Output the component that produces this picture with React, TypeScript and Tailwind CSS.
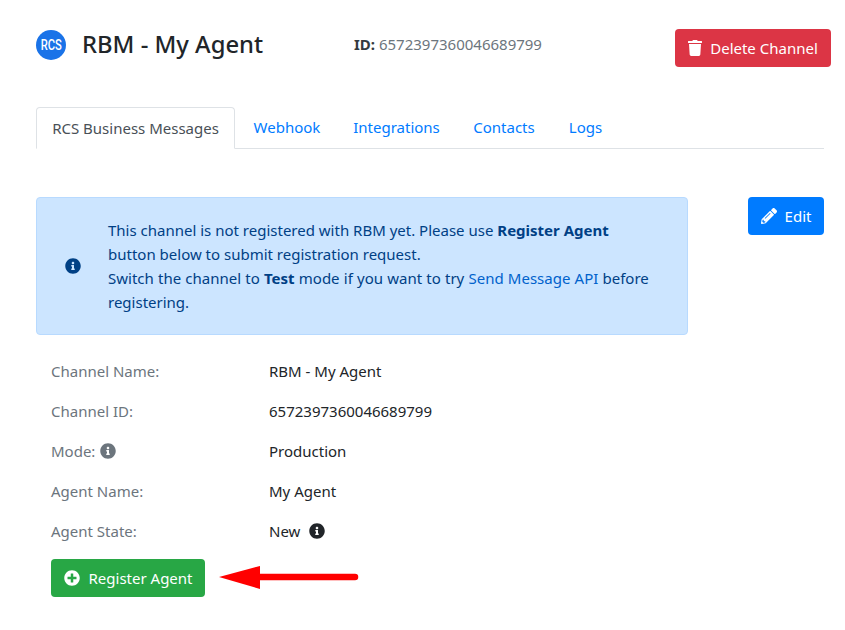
import React from 'react';
import { FaInfoCircle, FaPencilAlt, FaPlusCircle, FaTrash } from 'react-icons/fa';

const rows = [
  { label: 'Channel Name:', value: 'RBM - My Agent' },
  { label: 'Channel ID:', value: '6572397360046689799' },
  { label: 'Mode:', value: 'Production', labelInfo: true },
  { label: 'Agent Name:', value: 'My Agent' },
  { label: 'Agent State:', value: 'New', valueInfo: true },
];

export default function App() {
  return (
    <div className="w-[845px] h-[630px] bg-white overflow-hidden pl-[36px] pr-[21px] pt-[29px] font-['Noto_Sans',sans-serif] text-[15px] text-[#212529]">
      {/* Header */}
      <div className="flex items-start h-[38px]">
        <div className="w-[30px] h-[30px] mt-px rounded-full bg-[#1a73e8] flex items-center justify-center text-white text-[14px] font-['Roboto',sans-serif] font-medium shrink-0">
          <span className="scale-x-[0.8]">RCS</span>
        </div>
        <h1 className="ml-4 w-[272px] text-[23.8px] leading-[30px] font-medium">RBM - My Agent</h1>
        <div className="leading-[30px] text-[#6c757d] text-[15px]">
          <span className="font-bold text-[#343a40]">ID:</span> 6572397360046689799
        </div>
        <button className="ml-auto -mr-[7px] h-[38px] w-[156px] rounded bg-[#dc3545] text-white flex items-center justify-center gap-2">
          <FaTrash className="w-[14px] h-[16px]" />
          Delete Channel
        </button>
      </div>

      {/* Tabs */}
      <div className="mt-[40px] flex h-[42px] border-b border-[#dee2e6]">
        <div className="w-[199px] h-[42px] flex items-center justify-center text-[#495057] bg-white border border-[#dee2e6] border-b-white rounded-t">
          RCS Business Messages
        </div>
        <div className="w-[104px] h-[41px] flex items-center justify-center text-[#007bff]">Webhook</div>
        <div className="w-[115px] h-[41px] flex items-center justify-center text-[#007bff]">Integrations</div>
        <div className="w-[100px] h-[41px] flex items-center justify-center text-[#007bff]">Contacts</div>
        <div className="w-[63px] h-[41px] flex items-center justify-center text-[#007bff]">Logs</div>
      </div>

      {/* Notice + edit */}
      <div className="mt-[48px] flex items-start justify-between">
        <div className="w-[652px] h-[138px] flex items-center bg-[#cce5ff] border border-[#b8daff] rounded text-[#004085]">
          <FaInfoCircle className="ml-[28px] w-[16px] h-[16px] shrink-0" />
          <p className="ml-[27px] w-[545px] leading-[24px]">
            This channel is not registered with RBM yet. Please use <b>Register Agent</b> button below to submit registration request.
            <br />
            <span className="[word-spacing:0.3px]">
              Switch the channel to <b>Test</b> mode if you want to try <span className="text-[#0062cc]">Send Message API</span> before registering.
            </span>
          </p>
        </div>
        <button className="w-[76px] h-[38px] rounded bg-[#007bff] text-white flex items-center justify-center gap-2">
          <FaPencilAlt className="w-[16px] h-[16px]" />
          Edit
        </button>
      </div>

      {/* Details */}
      <div className="mt-[16px] pl-[15px] flex flex-col">
        {rows.map((r) => (
          <div key={r.label} className="flex items-center h-[40px]">
            <div className="w-[218px] flex items-center gap-[5px] text-[#6c757d]">
              {r.label}
              {r.labelInfo && <FaInfoCircle className="w-[16px] h-[16px]" />}
            </div>
            <div className="flex items-center gap-[9px]">
              {r.value}
              {r.valueInfo && <FaInfoCircle className="w-[16px] h-[16px]" />}
            </div>
          </div>
        ))}
        <div className="mt-[8px] flex items-center">
          <button className="w-[154px] h-[38px] rounded bg-[#28a745] text-white flex items-center justify-center gap-[9px]">
            <FaPlusCircle className="w-[16px] h-[16px]" />
            Register Agent
          </button>
          <svg className="ml-[14px]" width="140" height="26" viewBox="0 0 140 26">
            <polygon points="0,12 41,1 41,24" fill="#ff0000" />
            <path d="M39 12 L136 12" stroke="#ff0000" strokeWidth="6.5" strokeLinecap="round" />
          </svg>
        </div>
      </div>
    </div>
  );
}
